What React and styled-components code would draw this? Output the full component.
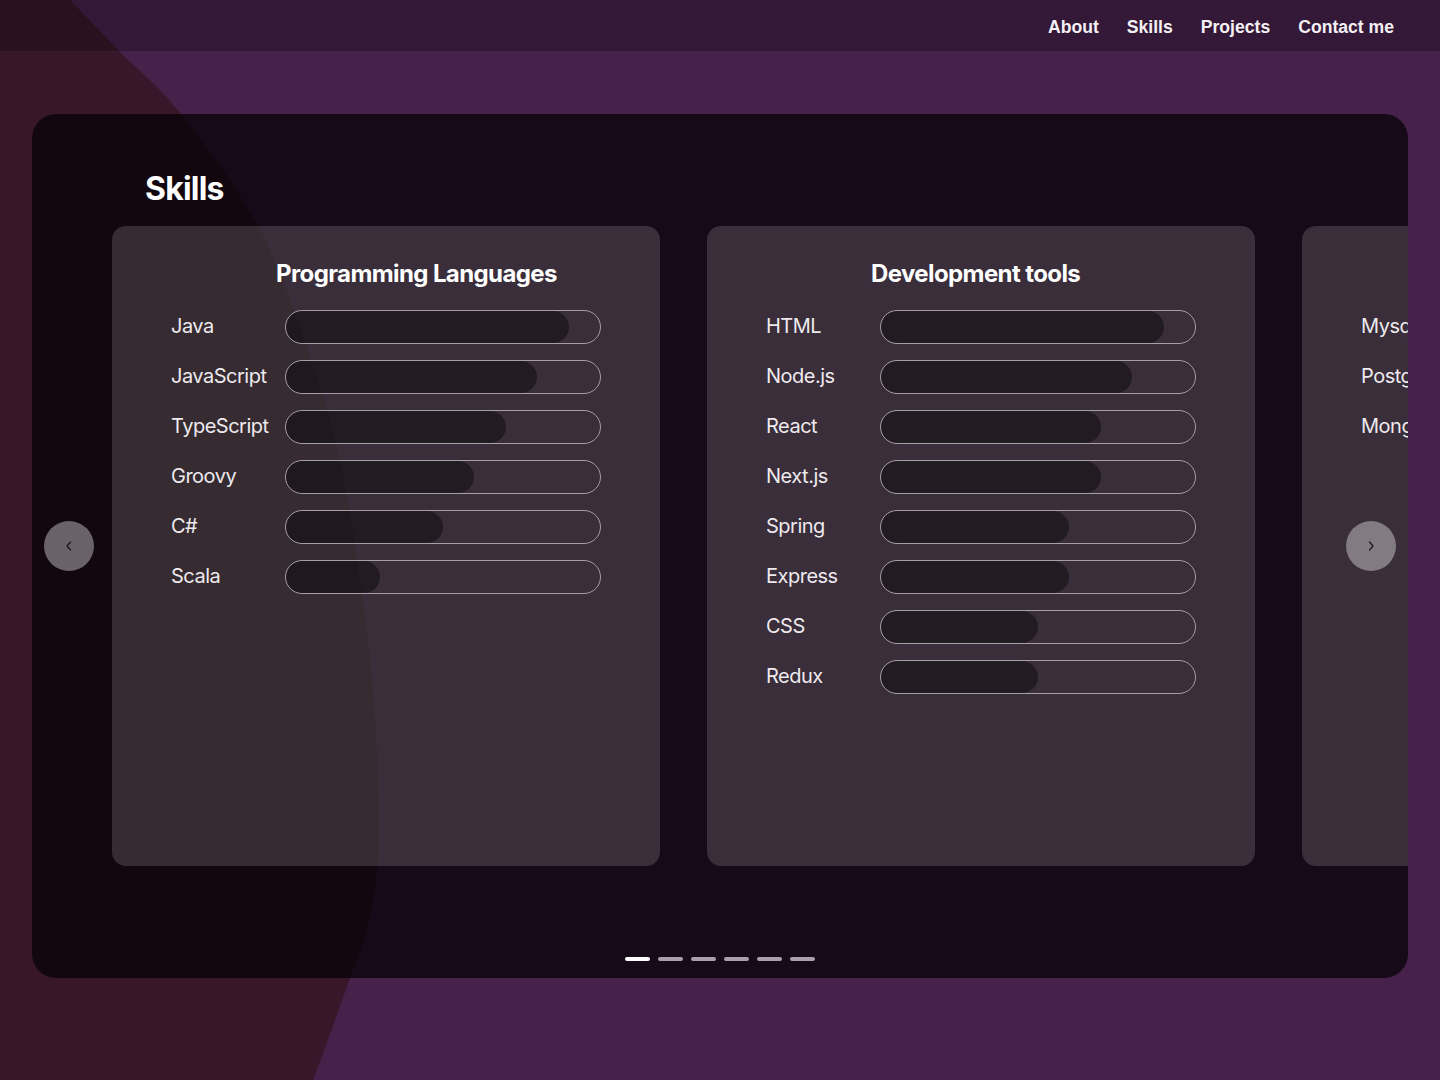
import React from "react";
import styled, { createGlobalStyle } from "styled-components";

const Global = createGlobalStyle`
  html, body { margin: 0; padding: 0; }
  body {
    background: #46214a;
    font-family: Inter, "Noto Sans", sans-serif;
    color: #fff;
  }
  * { box-sizing: border-box; }
`;

const Page = styled.div`
  position: relative;
  width: 1440px;
  height: 1080px;
  overflow: hidden;
  background: #46214a;
`;

const Blob = styled.svg`
  position: absolute;
  left: 0;
  top: 0;
  width: 1440px;
  height: 1080px;
  z-index: 0;
  pointer-events: none;
`;

const Layer = styled.div`
  position: relative;
  z-index: 1;
  display: flex;
  flex-direction: column;
`;

const Nav = styled.nav`
  height: 51px;
  background: rgba(0, 0, 0, 0.25);
  display: flex;
  justify-content: flex-end;
  align-items: center;
  gap: 28px;
  padding: 3px 46px 0 0;
`;

const NavLink = styled.a`
  font-family: "Liberation Sans", Arial, sans-serif;
  font-weight: 700;
  font-size: 17.6px;
  color: #f4f0f4;
  text-decoration: none;
`;

const Section = styled.section`
  position: relative;
  margin: 63px 32px 0;
  height: 864px;
  border-radius: 24px;
  background: rgba(0, 0, 0, 0.67);
  overflow: hidden;
  display: flex;
  flex-direction: column;
`;

const Heading = styled.h2`
  margin: 55px 0 17px 113px;
  font-size: 32px;
  line-height: 40px;
  font-weight: 700;
  letter-spacing: -0.8px;
  color: #fff;
`;

const Viewport = styled.div`
  padding-left: 80px;
`;

const Track = styled.div`
  display: flex;
  gap: 47px;
`;

const Card = styled.div`
  flex: 0 0 547px;
  height: 640px;
  border-radius: 14px;
  background: rgba(255, 255, 255, 0.15);
  padding: 32px 59px 31px;
  display: flex;
  flex-direction: column;
`;

const CardTitle = styled.h3`
  margin: 0 0 20px 105px;
  font-size: 24px;
  line-height: 32px;
  font-weight: 700;
  letter-spacing: -0.6px;
  color: #fff;
  white-space: nowrap;
`;

const Rows = styled.div`
  display: flex;
  flex-direction: column;
  gap: 16px;
`;

const Row = styled.div`
  display: grid;
  grid-template-columns: 114px 316px;
  align-items: center;
  height: 34px;
`;

const Label = styled.span`
  font-size: 20px;
  letter-spacing: -0.5px;
  line-height: 24px;
  margin-top: -2px;
  color: #eeeaee;
  white-space: nowrap;
`;

const Bar = styled.div`
  height: 34px;
  border: 1px solid #a59ea6;
  border-radius: 17px;
  overflow: hidden;
`;

const Fill = styled.div`
  height: 100%;
  border-radius: 16px;
  background: rgba(0, 0, 0, 0.4);
`;

const Arrow = styled.button`
  position: absolute;
  top: 407px;
  ${(p) => (p.$side === "left" ? "left: 12px;" : "right: 12px;")}
  width: 50px;
  height: 50px;
  border-radius: 50%;
  border: none;
  padding: 0;
  background: rgba(255, 255, 255, 0.37);
  display: flex;
  align-items: center;
  justify-content: center;
  cursor: pointer;
`;

const Dots = styled.div`
  margin-top: 91px;
  display: flex;
  justify-content: center;
  gap: 8px;
`;

const Dot = styled.span`
  width: 25px;
  height: 4px;
  border-radius: 2px;
  background: ${(p) => (p.$active ? "#ffffff" : "#a8a1a9")};
`;

const groups = [
  {
    title: "Programming Languages",
    items: [
      ["Java", 0.9],
      ["JavaScript", 0.8],
      ["TypeScript", 0.7],
      ["Groovy", 0.6],
      ["C#", 0.5],
      ["Scala", 0.3],
    ],
  },
  {
    title: "Development tools",
    items: [
      ["HTML", 0.9],
      ["Node.js", 0.8],
      ["React", 0.7],
      ["Next.js", 0.7],
      ["Spring", 0.6],
      ["Express", 0.6],
      ["CSS", 0.5],
      ["Redux", 0.5],
    ],
  },
  {
    title: "Databases",
    items: [
      ["Mysql", 0.8],
      ["PostgreSQL", 0.7],
      ["MongoDB", 0.6],
    ],
  },
];

const blobPts = [
  [30, -40],
  [70, 0],
  [120, 52],
  [180, 113],
  [260, 230],
  [318, 380],
  [344, 480],
  [360, 580],
  [372, 680],
  [378, 780],
  [378, 860],
  [368, 925],
  [350, 978],
  [313, 1080],
  [290, 1130],
];

function smoothPath(pts) {
  let d = `M ${pts[0][0]} ${pts[0][1]}`;
  for (let i = 0; i < pts.length - 1; i++) {
    const p0 = pts[i - 1] || pts[i];
    const p1 = pts[i];
    const p2 = pts[i + 1];
    const p3 = pts[i + 2] || p2;
    const c1 = [p1[0] + (p2[0] - p0[0]) / 6, p1[1] + (p2[1] - p0[1]) / 6];
    const c2 = [p2[0] - (p3[0] - p1[0]) / 6, p2[1] - (p3[1] - p1[1]) / 6];
    d += ` C ${c1[0].toFixed(1)} ${c1[1].toFixed(1)} ${c2[0].toFixed(1)} ${c2[1].toFixed(1)} ${p2[0]} ${p2[1]}`;
  }
  return d + " L -20 1130 L -20 -40 Z";
}

const Chevron = ({ dir }) => (
  <svg width="10" height="12" viewBox="0 0 10 12" fill="none">
    <polyline
      points={dir === "left" ? "6.5,2 3,6 6.5,10" : "3.5,2 7,6 3.5,10"}
      stroke="#1c161c"
      strokeWidth="1.2"
      strokeLinecap="round"
      strokeLinejoin="round"
    />
  </svg>
);

export default function App() {
  return (
    <>
      <Global />
      <Page>
        <Blob viewBox="0 0 1440 1080">
          <path d={smoothPath(blobPts)} fill="#38172b" />
        </Blob>
        <Layer>
          <Nav>
            <NavLink href="#about">About</NavLink>
            <NavLink href="#skills">Skills</NavLink>
            <NavLink href="#projects">Projects</NavLink>
            <NavLink href="#contact">Contact me</NavLink>
          </Nav>
          <Section>
            <Heading>Skills</Heading>
            <Viewport>
              <Track>
                {groups.map((g) => (
                  <Card key={g.title}>
                    <CardTitle>{g.title}</CardTitle>
                    <Rows>
                      {g.items.map(([name, v]) => (
                        <Row key={name}>
                          <Label>{name}</Label>
                          <Bar>
                            <Fill style={{ width: `${v * 100}%` }} />
                          </Bar>
                        </Row>
                      ))}
                    </Rows>
                  </Card>
                ))}
              </Track>
            </Viewport>
            <Dots>
              {[0, 1, 2, 3, 4, 5].map((i) => (
                <Dot key={i} $active={i === 0} />
              ))}
            </Dots>
            <Arrow $side="left" aria-label="previous">
              <Chevron dir="left" />
            </Arrow>
            <Arrow $side="right" aria-label="next">
              <Chevron dir="right" />
            </Arrow>
          </Section>
        </Layer>
      </Page>
    </>
  );
}
